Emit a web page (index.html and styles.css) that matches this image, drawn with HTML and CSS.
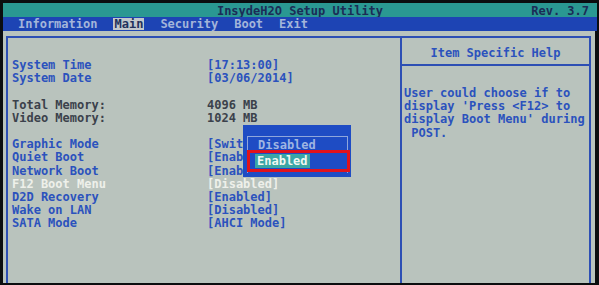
FILE: index.html
```html
<!DOCTYPE html>
<html>
	<head>
		<meta charset="UTF-8">
		<title>InsydeH2O Setup Utility</title>
		<link rel="stylesheet" href="styles.css">
	</head>
	<body>
		<div class="screen">
			<div class="titlebar">
				<span></span>
				<span class="title">InsydeH2O Setup Utility</span>
				<span class="rev">Rev. 3.7</span>
			</div>
			<div class="menu">
				<span>Information</span>
				<span class="active">Main</span>
				<span>Security</span>
				<span>Boot</span>
				<span>Exit</span>
			</div>
			<div class="body">
				<div class="frame">
					<div class="left">
						<div class="items">
							<span class="blue">System Time</span><span class="blue">[17:13:00]</span>
							<span class="blue">System Date</span><span class="blue">[03/06/2014]</span>
							<span></span><span></span>
							<span class="grey">Total Memory:</span><span class="grey">4096 MB</span>
							<span class="grey">Video Memory:</span><span class="grey">1024 MB</span>
							<span></span><span></span>
							<span class="blue">Graphic Mode</span><span class="blue">[Switchable]</span>
							<span class="blue">Quiet Boot</span><span class="blue">[Enabled]</span>
							<span class="blue">Network Boot</span><span class="blue">[Enabled]</span>
							<span class="white">F12 Boot Menu</span><span class="white">[Disabled]</span>
							<span class="blue">D2D Recovery</span><span class="blue">[Enabled]</span>
							<span class="blue">Wake on LAN</span><span class="blue">[Disabled]</span>
							<span class="blue">SATA Mode</span><span class="blue">[AHCI Mode]</span>
						</div>
					</div>
					<div class="right">
						<div class="help-head">Item Specific Help</div>
						<div class="help-text">User could choose if to
display 'Press &lt;F12&gt; to
display Boot Menu' during
 POST.</div>
					</div>
				</div>
			</div>

			<div class="popup">
				<div class="list">
					<div class="opt">Disabled</div>
					<div class="opt selected"><span class="hl">Enabled</span></div>
				</div>
			</div>
		</div>
	</body>
</html>
```

FILE: styles.css
```css
html, body {
	margin: 0;
	padding: 0;
	background: #0b0d0f;
}

body {
	font-family: "DejaVu Sans Mono", "Liberation Mono", monospace;
	font-size: 12px;
	font-weight: bold;
}

.screen {
	position: relative;
	width: 599px;
	height: 285px;
	box-sizing: border-box;
	padding: 3px 2px 2px 3px;
	display: flex;
	flex-direction: column;
	overflow: hidden;
}

.titlebar {
	height: 14px;
	background: #2a9892;
	color: #1b2c56;
	display: grid;
	grid-template-columns: 1fr auto 1fr;
	align-items: center;
	line-height: 14px;
	padding-top: 1px;
	box-sizing: border-box;
}

.rev {
	justify-self: end;
	padding-right: 8px;
}

.menu {
	height: 14px;
	background: #1d44b4;
	color: #a3b5da;
	display: flex;
	align-items: center;
	gap: 16px;
	padding-left: 15px;
	line-height: 12px;
}

.menu .active {
	background: #c3c8cc;
	color: #22315c;
	padding: 0 1px;
}

.body {
	flex: 1;
	background: #b9c3bd;
	padding: 5px 4px 0 3px;
	margin-right: 2px;
}

.frame {
	height: 100%;
	box-sizing: border-box;
	border: 2px solid #2d4fb4;
	border-bottom: none;
	display: flex;
}

.left {
	width: 394px;
	box-sizing: border-box;
	border-right: 2px solid #2d4fb4;
	padding: 21px 0 0 4px;
}

.items {
	display: grid;
	grid-template-columns: 195px auto;
	grid-auto-rows: 13.2px;
	line-height: 13.2px;
	white-space: pre;
}

.blue {
	color: #2b52bd;
}

.grey {
	color: #3b414b;
}

.white {
	color: #eef0ea;
}

.right {
	flex: 1;
	display: flex;
	flex-direction: column;
}

.help-head {
	height: 28px;
	border-bottom: 2px solid #2d4fb4;
	color: #2b52bd;
	text-align: center;
	line-height: 24px;
	padding-top: 3px;
	box-sizing: border-box;
}

.help-text {
	padding: 21px 0 0 2px;
	line-height: 13.2px;
	color: #2b52bd;
	white-space: pre;
}

.popup {
	position: absolute;
	left: 243px;
	top: 125px;
	width: 108px;
	height: 52px;
	box-sizing: border-box;
	background: #1e4cc4;
	padding: 11px 3px 0 4px;
}

.list {
	height: 37px;
	border: 1px solid #8ea6dc;
	border-bottom: none;
	padding-top: 1px;
	box-sizing: border-box;
}

.opt {
	height: 13px;
	line-height: 14px;
	padding-left: 10px;
	color: #9fb5e2;
}

.opt.selected {
	height: 16px;
	line-height: 16px;
	margin: -1px -3px 0 -1px;
	padding-left: 5px;
	border: 3px solid #e0121c;
}

.hl {
	background: #3aa6a6;
	color: #f2f8f2;
	padding: 0 2px;
}
```
